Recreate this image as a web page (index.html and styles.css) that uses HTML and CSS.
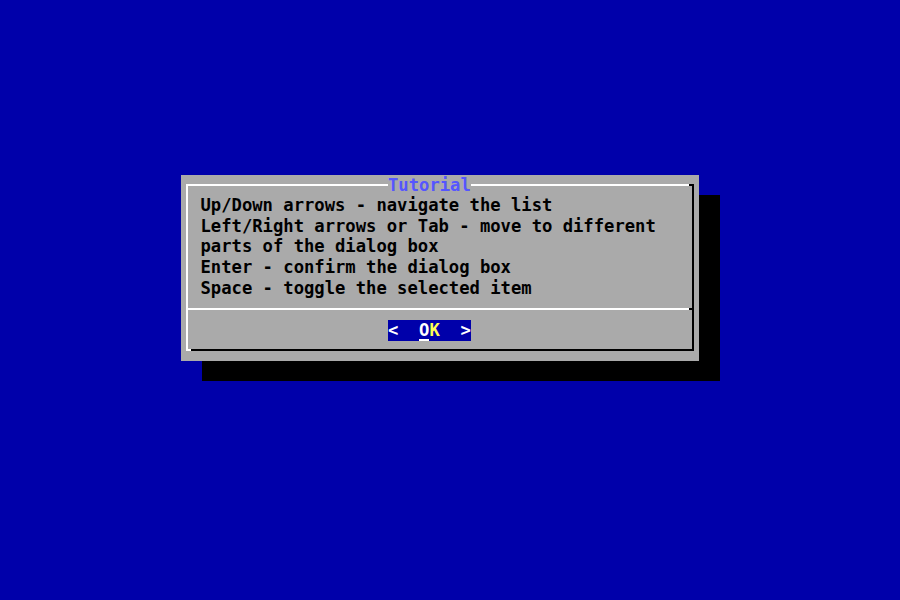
FILE: index.html
```html
<!DOCTYPE html>
<html>
<head>
<meta charset="utf-8">
<link rel="stylesheet" href="styles.css">
</head>
<body>
<div class="screen">
  <div class="dialog">
    <div class="frame">
      <div class="title">Tutorial</div>
      <div class="msg">
        <div class="line">Up/Down arrows - navigate the list</div>
        <div class="line">Left/Right arrows or Tab - move to different</div>
        <div class="line">parts of the dialog box</div>
        <div class="line">Enter - confirm the dialog box</div>
        <div class="line">Space - toggle the selected item</div>
      </div>
      <div class="sep"></div>
      <div class="buttons"><span class="btn">&lt;  <span class="key">O</span><span class="lbl">K</span>  &gt;</span></div>
    </div>
  </div>
</div>
</body>
</html>
```

FILE: styles.css
```css
html, body {
  margin: 0;
  padding: 0;
  overflow: hidden;
}

.screen {
  width: 900px;
  height: 600px;
  box-sizing: border-box;
  background: #0000aa;
  padding: 175px 0 0 181px;
  font-family: "DejaVu Sans Mono", "Liberation Mono", monospace;
  font-weight: bold;
  font-size: 17.2px;
  line-height: 20.7px;
}

.dialog {
  width: 518px;
  height: 186px;
  box-sizing: border-box;
  padding: 9px 5px 10px 5px;
  background: #aaaaaa;
  box-shadow: 21px 20px 0 #000;
  color: #000;
}

.frame {
  position: relative;
  width: 508px;
  height: 167px;
  box-sizing: border-box;
  border: 2px solid;
  border-color: #ffffff #000000 #000000 #ffffff;
  padding-top: 9px;
}

.frame::before {
  content: "";
  position: absolute;
  top: -2px;
  right: -2px;
  width: 5px;
  height: 2px;
  background: #000;
}

.frame::after {
  content: "";
  position: absolute;
  bottom: -2px;
  left: -2px;
  width: 5px;
  height: 2px;
  background: #fff;
}

.title {
  position: absolute;
  top: -11px;
  left: 200px;
  width: 83px;
  height: 20.7px;
  background: #aaaaaa;
  color: #5555ff;
}

.msg {
  padding-left: 12.5px;
}

.line {
  white-space: pre;
  height: 20.7px;
}

.sep {
  margin-top: 9.5px;
  height: 2px;
  background: linear-gradient(to right, #ffffff calc(100% - 3px), #000000 0);
}

.buttons {
  margin-top: 10px;
  padding-left: 200px;
  height: 20.7px;
}

.btn {
  display: inline-block;
  height: 20.7px;
  width: 83px;
  background: #0000aa;
  color: #ffffff;
  white-space: pre;
  vertical-align: top;
}

.key {
  display: inline-block;
  height: 20.7px;
  vertical-align: top;
  box-shadow: inset 0 -2px 0 #ffffff;
}

.lbl {
  color: #ffff55;
}
```
